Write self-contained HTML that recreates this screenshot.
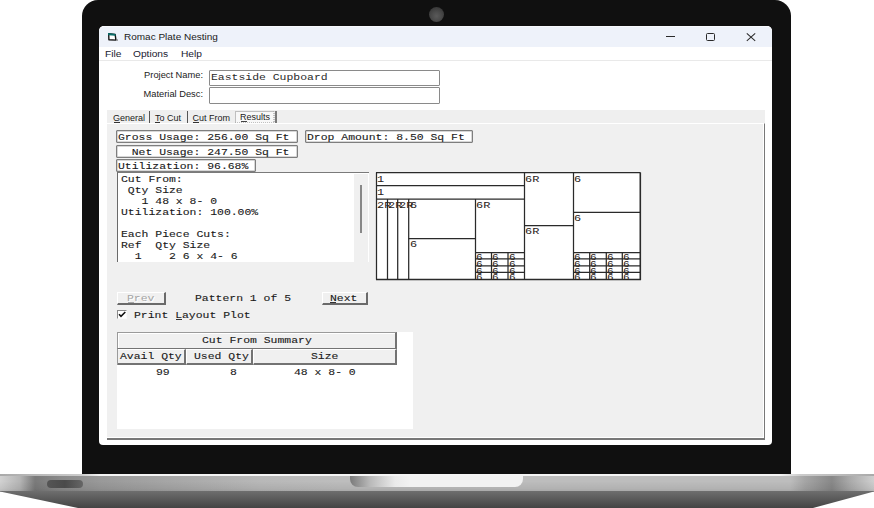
<!DOCTYPE html>
<html><head><meta charset="utf-8"><style>
*{margin:0;padding:0;box-sizing:border-box}
html,body{width:874px;height:508px;overflow:hidden;background:#fff}
body{position:relative;font-family:"Liberation Sans",sans-serif}
.a{position:absolute}
.m{position:absolute;font-family:"Liberation Mono",monospace;font-size:9px;color:#1a1a1a;-webkit-text-stroke:0.1px #1a1a1a;white-space:pre;line-height:11px;transform:scaleX(1.27);transform-origin:0 0}
.s{position:absolute;font-family:"Liberation Sans",sans-serif;white-space:pre;color:#1a1a1a}
.box{position:absolute;background:#fff;border:1px solid #7e7e7e;border-radius:1px;box-shadow:inset 0 0 0 0.5px #b0b0b0}
.btn{position:absolute;background:#f0f0f0;border-top:1px solid #fff;border-left:1px solid #fff;border-right:2px solid #6a6a6a;border-bottom:2px solid #6a6a6a}
.pl{position:absolute;background:#262626}
.lb{position:absolute;font-family:"Liberation Mono",monospace;font-size:7px;color:#2a2218;white-space:pre;line-height:8px;transform:scaleX(1.1);transform-origin:0 0}
</style></head><body>
<div class="a" style="left:82px;top:0;width:709px;height:474px;background:#101010;border-radius:16px 16px 0 0"></div>
<div class="a" style="left:429px;top:7px;width:15px;height:15px;border-radius:50%;background:radial-gradient(circle at 50% 60%,#5a5a5a 0,#4a4a4a 40%,#3c3c3c 70%,#2a2a2a 100%)"></div>
<div class="a" style="left:0;top:474px;width:874px;height:17.5px;background:linear-gradient(90deg,#d2d2d2 0,#b5b5b5 20px,#7a7a7a 35px,#8a8a8a 60px,#999 100px,#a8a8a8 180px,#b8b8b8 260px,#bdbdbd 340px,#bdbdbd 790px,#a5a5a5 805px,#888 832px,#aaa 850px,#cfcfcf 874px)"></div>
<div class="a" style="left:0;top:474px;width:874px;height:17.5px;background:linear-gradient(180deg,rgba(255,255,255,0) 0,rgba(255,255,255,0) 40%,rgba(0,0,0,0.06) 80%,rgba(0,0,0,0.12) 100%)"></div>
<div class="a" style="left:0;top:474px;width:874px;height:1.5px;background:linear-gradient(90deg,#aaa 0,#ccc 82px,#f4f4f4 100px,#f4f4f4 780px,#ccc 800px,#aaa 874px)"></div>
<div class="a" style="left:350px;top:476px;width:173px;height:11px;border-radius:0 0 8px 8px;background:linear-gradient(90deg,#7a7a7a 0,#b9b9b9 20px,#eaeaea 45px,#f2f2f2 60px,#f2f2f2 100%)"></div>
<div class="a" style="left:47px;top:480px;width:36px;height:8px;border-radius:4px;background:linear-gradient(90deg,#555,#4a4a4a 50%,#666)"></div>
<svg class="a" style="left:0;top:491px" width="874" height="17"><defs><linearGradient id="bg" x1="0" y1="0" x2="0" y2="1"><stop offset="0" stop-color="#6e6e6e"/><stop offset="1" stop-color="#444"/></linearGradient></defs><polygon points="0,0 874,0 874,0.5 813,17 78,17 0,0.5" fill="url(#bg)"/></svg>
<div class="a" style="left:99px;top:26px;width:673px;height:419px;background:#fff;border-radius:5px 5px 4px 4px"></div>
<div class="a" style="left:99px;top:26px;width:673px;height:21px;background:#eef2fa;border-radius:5px 5px 0 0;border-top:1px solid #f8f9fd"></div>
<svg class="a" style="left:106px;top:31px" width="14" height="12"><path d="M2.7 2.7 L9.2 3.5 L9.9 9.1 L2.9 8.8 Z" fill="#fff" stroke="#151515" stroke-width="1.4" stroke-linejoin="round"/><path d="M2 2.1 L9.5 3 L9.7 4.8 L2.2 4.2 Z" fill="#0b6e6a"/><rect x="10.6" y="8.4" width="1.3" height="1.3" fill="#777"/></svg>
<div class="s" style="left:124px;top:30.5px;font-size:9px;line-height:12px;color:#1a1a1a;transform:scaleX(1.11);transform-origin:0 0">Romac Plate Nesting</div>
<div class="a" style="left:666px;top:36px;width:8.5px;height:1px;background:#2a2a2a"></div>
<div class="a" style="left:706px;top:33.2px;width:8.8px;height:7.6px;border:1.1px solid #2a2a2a;border-radius:1.5px"></div>
<svg class="a" style="left:745px;top:32px" width="12" height="10"><path d="M1.8 1.4 L10.2 8.8 M10.2 1.4 L1.8 8.8" stroke="#2a2a2a" stroke-width="1.05"/></svg>
<div class="s" style="left:105px;top:48px;font-size:9.2px;line-height:12px;color:#201a30;transform:scaleX(1.11);transform-origin:0 0">File</div>
<div class="s" style="left:133px;top:48px;font-size:9.2px;line-height:12px;color:#201a30;transform:scaleX(1.11);transform-origin:0 0">Options</div>
<div class="s" style="left:181px;top:48px;font-size:9.2px;line-height:12px;color:#201a30;transform:scaleX(1.11);transform-origin:0 0">Help</div>
<div class="a" style="left:99px;top:60px;width:673px;height:1px;background:#e9e9e9"></div>
<div class="s" style="left:140px;top:70px;width:63px;text-align:right;font-size:9.3px;line-height:11px;letter-spacing:0px">Project Name:</div>
<div class="s" style="left:140px;top:89px;width:63px;text-align:right;font-size:9.3px;line-height:11px;letter-spacing:0px">Material Desc:</div>
<div class="a" style="left:209px;top:70px;width:231px;height:16px;border:1px solid #8a8a8a;border-radius:1px;background:#fff"></div>
<div class="a" style="left:209px;top:87px;width:231px;height:17px;border:1px solid #8a8a8a;border-radius:1px;background:#fff"></div>
<div class="m" style="left:211px;top:73px;transform:scaleX(1.27);-webkit-text-stroke:0;color:#2a2a2a">Eastside Cupboard</div>
<div class="a" style="left:107px;top:110px;width:658px;height:14px;background:#efefef"></div>
<div class="s" style="left:113px;top:113px;font-size:9px;line-height:11px">General</div>
<div class="a" style="left:113.5px;top:122px;width:6px;height:1px;background:#333"></div>
<div class="a" style="left:149px;top:111px;width:1px;height:12px;background:#555"></div>
<div class="s" style="left:155px;top:113px;font-size:9px;line-height:11px">To Cut</div>
<div class="a" style="left:155px;top:122px;width:5px;height:1px;background:#333"></div>
<div class="a" style="left:187px;top:111px;width:1px;height:12px;background:#555"></div>
<div class="s" style="left:192.5px;top:113px;font-size:9px;line-height:11px">Cut From</div>
<div class="a" style="left:193px;top:122px;width:6px;height:1px;background:#333"></div>
<svg class="a" style="left:235px;top:111px" width="40" height="13"><rect x="0.5" y="0.5" width="38.5" height="11.5" fill="#f8f8f8" stroke="#8a8a8a" stroke-width="1" stroke-dasharray="1 1"/></svg>
<div class="s" style="left:240px;top:112px;font-size:9px;line-height:11px">Results</div>
<div class="a" style="left:240.5px;top:120.5px;width:6px;height:1px;background:#444"></div>
<div class="a" style="left:275.3px;top:110.5px;width:1.3px;height:13.5px;background:#7a7a7a"></div>
<div class="a" style="left:107px;top:123px;width:658px;height:317px;background:#f0f0f0;border-top:1px solid #fff;border-right:1px solid #787878;border-bottom:2px solid #787878;box-shadow:inset -1px -1px 0 #fff"></div>
<div class="box" style="left:116px;top:130px;width:182px;height:13px"></div>
<div class="box" style="left:116px;top:145px;width:182px;height:13px"></div>
<div class="box" style="left:116px;top:159px;width:140px;height:13px"></div>
<div class="box" style="left:305px;top:130px;width:168px;height:13px"></div>
<div class="m" style="left:118px;top:133px">Gross Usage: 256.00 Sq Ft</div>
<div class="m" style="left:118px;top:148px">  Net Usage: 247.50 Sq Ft</div>
<div class="m" style="left:118px;top:162px">Utilization: 96.68%</div>
<div class="m" style="left:307px;top:133px">Drop Amount: 8.50 Sq Ft</div>
<div class="a" style="left:117px;top:172px;width:252px;height:90px;background:#fff;border-top:1.5px solid #7a7a7a;border-left:1.5px solid #6a6a6a"></div>
<div class="a" style="left:354px;top:174px;width:14px;height:88px;background:#f0f0f0"></div>
<div class="a" style="left:359.5px;top:184.5px;width:2px;height:48px;background:#888"></div>
<div class="m" style="left:120.6px;top:175px">Cut From:
 Qty Size
   1 48 x 8- 0
Utilization: 100.00%

Each Piece Cuts:
Ref  Qty Size
  1    2 6 x 4- 6</div>
<svg class="a" style="left:370px;top:166px" width="280" height="120"><rect x="6" y="6.5" width="264" height="106.5" fill="#fff"/><line x1="6" y1="6.5" x2="270.5" y2="6.5" stroke="#2a2a2a" stroke-width="1.25"/><line x1="6" y1="113.5" x2="271" y2="113.5" stroke="#2a2a2a" stroke-width="1.5"/><line x1="6.5" y1="6.5" x2="6.5" y2="113.5" stroke="#2a2a2a" stroke-width="1.25"/><line x1="270.3" y1="6.5" x2="270.3" y2="114" stroke="#2a2a2a" stroke-width="1.6"/><line x1="6" y1="19.5" x2="154.5" y2="19.5" stroke="#2a2a2a" stroke-width="1.25"/><line x1="6" y1="33.2" x2="154.5" y2="33.2" stroke="#2a2a2a" stroke-width="1.25"/><line x1="17.5" y1="33" x2="17.5" y2="113.5" stroke="#2a2a2a" stroke-width="1.25"/><line x1="27.7" y1="33" x2="27.7" y2="113.5" stroke="#2a2a2a" stroke-width="1.25"/><line x1="38.7" y1="33" x2="38.7" y2="113.5" stroke="#2a2a2a" stroke-width="1.25"/><line x1="105.5" y1="33" x2="105.5" y2="113.5" stroke="#2a2a2a" stroke-width="1.25"/><line x1="38.5" y1="72.5" x2="105.5" y2="72.5" stroke="#2a2a2a" stroke-width="1.25"/><line x1="154.5" y1="6.5" x2="154.5" y2="113.5" stroke="#2a2a2a" stroke-width="1.25"/><line x1="203.5" y1="6.5" x2="203.5" y2="113.5" stroke="#2a2a2a" stroke-width="1.25"/><line x1="154.5" y1="59.5" x2="203.5" y2="59.5" stroke="#2a2a2a" stroke-width="1.25"/><line x1="203.5" y1="46.3" x2="270" y2="46.3" stroke="#2a2a2a" stroke-width="1.25"/><line x1="105.5" y1="86.5" x2="154.5" y2="86.5" stroke="#2a2a2a" stroke-width="1.25"/><line x1="203.5" y1="86.5" x2="270" y2="86.5" stroke="#2a2a2a" stroke-width="1.25"/><line x1="105.5" y1="92.9" x2="154.5" y2="92.9" stroke="#2a2a2a" stroke-width="1.25"/><line x1="203.5" y1="92.9" x2="270" y2="92.9" stroke="#2a2a2a" stroke-width="1.25"/><line x1="105.5" y1="99.9" x2="154.5" y2="99.9" stroke="#2a2a2a" stroke-width="1.25"/><line x1="203.5" y1="99.9" x2="270" y2="99.9" stroke="#2a2a2a" stroke-width="1.25"/><line x1="105.5" y1="106.4" x2="154.5" y2="106.4" stroke="#2a2a2a" stroke-width="1.25"/><line x1="203.5" y1="106.4" x2="270" y2="106.4" stroke="#2a2a2a" stroke-width="1.25"/><line x1="121.5" y1="86.5" x2="121.5" y2="113.5" stroke="#2a2a2a" stroke-width="1.25"/><line x1="138" y1="86.5" x2="138" y2="113.5" stroke="#2a2a2a" stroke-width="1.25"/><line x1="219.7" y1="86.5" x2="219.7" y2="113.5" stroke="#2a2a2a" stroke-width="1.25"/><line x1="236.3" y1="86.5" x2="236.3" y2="113.5" stroke="#2a2a2a" stroke-width="1.25"/><line x1="252.3" y1="86.5" x2="252.3" y2="113.5" stroke="#2a2a2a" stroke-width="1.25"/></svg>
<div class="lb" style="left:377px;top:175.5px;font-size:8.5px;transform:scaleX(1.4)">1</div>
<div class="lb" style="left:377px;top:188.5px;font-size:8.5px;transform:scaleX(1.4)">1</div>
<div class="lb" style="left:377px;top:202px;font-size:8.5px;transform:scaleX(1.4)">2R</div>
<div class="lb" style="left:388px;top:202px;font-size:8.5px;transform:scaleX(1.4)">2R</div>
<div class="lb" style="left:399px;top:202px;font-size:8.5px;transform:scaleX(1.4)">2R</div>
<div class="lb" style="left:410px;top:202px;font-size:8.5px;transform:scaleX(1.4)">6</div>
<div class="lb" style="left:410px;top:241px;font-size:8.5px;transform:scaleX(1.4)">6</div>
<div class="lb" style="left:476px;top:202px;font-size:8.5px;transform:scaleX(1.4)">6R</div>
<div class="lb" style="left:525px;top:175.5px;font-size:8.5px;transform:scaleX(1.4)">6R</div>
<div class="lb" style="left:525px;top:228px;font-size:8.5px;transform:scaleX(1.4)">6R</div>
<div class="lb" style="left:574px;top:175.5px;font-size:8.5px;transform:scaleX(1.4)">6</div>
<div class="lb" style="left:574px;top:214.5px;font-size:8.5px;transform:scaleX(1.4)">6</div>
<div class="lb" style="left:475.8px;top:254px;font-size:8.5px;transform:scaleX(1.3)">6</div>
<div class="lb" style="left:492px;top:254px;font-size:8.5px;transform:scaleX(1.3)">6</div>
<div class="lb" style="left:508.5px;top:254px;font-size:8.5px;transform:scaleX(1.3)">6</div>
<div class="lb" style="left:574px;top:254px;font-size:8.5px;transform:scaleX(1.3)">6</div>
<div class="lb" style="left:590.2px;top:254px;font-size:8.5px;transform:scaleX(1.3)">6</div>
<div class="lb" style="left:606.8px;top:254px;font-size:8.5px;transform:scaleX(1.3)">6</div>
<div class="lb" style="left:622.8px;top:254px;font-size:8.5px;transform:scaleX(1.3)">6</div>
<div class="lb" style="left:475.8px;top:260.5px;font-size:8.5px;transform:scaleX(1.3)">6</div>
<div class="lb" style="left:492px;top:260.5px;font-size:8.5px;transform:scaleX(1.3)">6</div>
<div class="lb" style="left:508.5px;top:260.5px;font-size:8.5px;transform:scaleX(1.3)">6</div>
<div class="lb" style="left:574px;top:260.5px;font-size:8.5px;transform:scaleX(1.3)">6</div>
<div class="lb" style="left:590.2px;top:260.5px;font-size:8.5px;transform:scaleX(1.3)">6</div>
<div class="lb" style="left:606.8px;top:260.5px;font-size:8.5px;transform:scaleX(1.3)">6</div>
<div class="lb" style="left:622.8px;top:260.5px;font-size:8.5px;transform:scaleX(1.3)">6</div>
<div class="lb" style="left:475.8px;top:267.5px;font-size:8.5px;transform:scaleX(1.3)">6</div>
<div class="lb" style="left:492px;top:267.5px;font-size:8.5px;transform:scaleX(1.3)">6</div>
<div class="lb" style="left:508.5px;top:267.5px;font-size:8.5px;transform:scaleX(1.3)">6</div>
<div class="lb" style="left:574px;top:267.5px;font-size:8.5px;transform:scaleX(1.3)">6</div>
<div class="lb" style="left:590.2px;top:267.5px;font-size:8.5px;transform:scaleX(1.3)">6</div>
<div class="lb" style="left:606.8px;top:267.5px;font-size:8.5px;transform:scaleX(1.3)">6</div>
<div class="lb" style="left:622.8px;top:267.5px;font-size:8.5px;transform:scaleX(1.3)">6</div>
<div class="lb" style="left:475.8px;top:274px;font-size:8.5px;transform:scaleX(1.3)">6</div>
<div class="lb" style="left:492px;top:274px;font-size:8.5px;transform:scaleX(1.3)">6</div>
<div class="lb" style="left:508.5px;top:274px;font-size:8.5px;transform:scaleX(1.3)">6</div>
<div class="lb" style="left:574px;top:274px;font-size:8.5px;transform:scaleX(1.3)">6</div>
<div class="lb" style="left:590.2px;top:274px;font-size:8.5px;transform:scaleX(1.3)">6</div>
<div class="lb" style="left:606.8px;top:274px;font-size:8.5px;transform:scaleX(1.3)">6</div>
<div class="lb" style="left:622.8px;top:274px;font-size:8.5px;transform:scaleX(1.3)">6</div>
<div class="btn" style="left:116.5px;top:292px;width:49.5px;height:13px"></div>
<div class="m" style="left:128px;top:295px;color:#fff;-webkit-text-stroke:0">Prev</div>
<div class="m" style="left:127px;top:294px;color:#a4a4a4;-webkit-text-stroke:0">Prev</div>
<div class="a" style="left:128px;top:302px;width:6px;height:1px;background:#a8a8a8"></div>
<div class="m" style="left:194.5px;top:294px">Pattern 1 of 5</div>
<div class="btn" style="left:321.5px;top:292px;width:46px;height:13px"></div>
<div class="m" style="left:329.5px;top:294px">Next</div>
<div class="a" style="left:330px;top:302px;width:6px;height:1px;background:#333"></div>
<div class="a" style="left:116.5px;top:310px;width:10.5px;height:9px;background:#fff;border-top:1.5px solid #8a8a8a;border-left:1.5px solid #8a8a8a;border-right:1px solid #fafafa;border-bottom:1px solid #fafafa"></div>
<svg class="a" style="left:117px;top:310px" width="10" height="9"><path d="M2 4.2 L4 6.3 L8.3 2" fill="none" stroke="#111" stroke-width="1.6"/></svg>
<div class="m" style="left:133.5px;top:311px">Print Layout Plot</div>
<div class="a" style="left:176px;top:319px;width:6px;height:1px;background:#333"></div>
<div class="a" style="left:116.5px;top:331.5px;width:296px;height:97.5px;background:#fff"></div>
<div class="a" style="left:116.5px;top:331.5px;width:280.5px;height:17px;background:#f0f0f0;border-top:1px solid #9a9a9a;border-left:1px solid #9a9a9a;border-right:2px solid #737373;border-bottom:1.5px solid #737373;box-shadow:inset 1px 1px 0 #fff"></div>
<div class="a" style="left:116.5px;top:348.5px;width:69px;height:16px;background:#f0f0f0;border-left:1px solid #fff;border-top:1px solid #fff;border-right:2px solid #737373;border-bottom:2px solid #737373"></div>
<div class="a" style="left:185.5px;top:348.5px;width:67.5px;height:16px;background:#f0f0f0;border-left:1px solid #fff;border-top:1px solid #fff;border-right:2px solid #737373;border-bottom:2px solid #737373"></div>
<div class="a" style="left:253px;top:348.5px;width:144px;height:16px;background:#f0f0f0;border-left:1px solid #fff;border-top:1px solid #fff;border-right:2px solid #737373;border-bottom:2px solid #737373"></div>
<div class="a" style="left:116.5px;top:348.5px;width:1px;height:15px;background:#9a9a9a"></div>
<div class="m" style="left:202px;top:336px">Cut From Summary</div>
<div class="m" style="left:119.5px;top:352px">Avail Qty</div>
<div class="m" style="left:194px;top:352px">Used Qty</div>
<div class="m" style="left:310.5px;top:352px">Size</div>
<div class="m" style="left:155.5px;top:368px">99</div>
<div class="m" style="left:229.5px;top:368px">8</div>
<div class="m" style="left:294px;top:368px">48 x 8- 0</div>
</body></html>
